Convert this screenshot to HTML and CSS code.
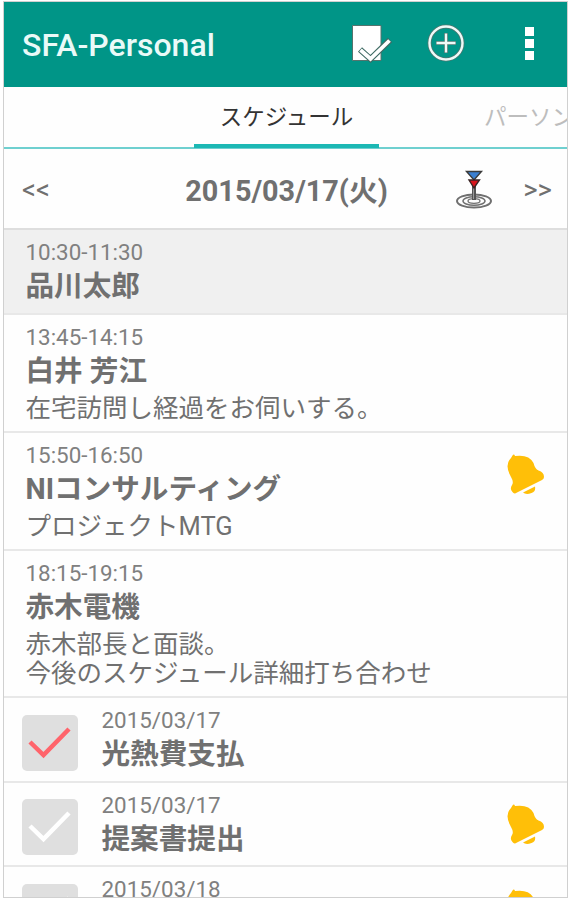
FILE: index.html
```
<!DOCTYPE html>
<html lang="ja">
<head>
  <meta charset="UTF-8">
  <title>SFA-Personal</title>
  <link rel="stylesheet" href="styles.css">
</head>
<body>
  <!-- shared icons -->
  <svg class="symbols">
    <symbol id="bell" viewBox="0 0 38 40">
      <path d="M4 4L5.500 1.500Q7-0.500 8 2Q22 0 26.500 9Q28 15 31.500 16.500Q37 18 37 23Q37 25 35 26L10 38.500Q7 40.500 5.500 38Q2.500 35 5 31Q7 28 4 23Q-3 11 4 4Z"/>
      <path d="M16 38.500L28 32.500Q29 38 24.500 39Q19 41 16 38.500Z"/>
    </symbol>
    <symbol id="check" viewBox="0 0 56 56">
      <path d="M8 27L21.500 40L47 14" fill="none" stroke="currentColor" stroke-width="4.500"/>
    </symbol>
  </svg>

  <div class="app">
    <header class="toolbar">
      <h1>SFA-Personal</h1>
      <svg class="icon-task" width="42" height="42" viewBox="0 0 42 42">
        <path d="M3.500 3.500H32V38.500H3.500Z" fill="#fff" stroke="#56736d" stroke-width="1"/>
        <path d="M11 27.500L21.500 37L41 18" fill="none" stroke="#3f6b64" stroke-width="6"/>
        <path d="M11.500 28L21.500 36.800L40.500 18.500" fill="none" stroke="#fff" stroke-width="3.800"/>
      </svg>
      <svg class="icon-add" width="38" height="38" viewBox="0 0 38 38" fill="none">
        <circle cx="19" cy="19" r="16.500" stroke="#4d7770" stroke-width="4"/>
        <path d="M9 19H29M19 9V29" stroke="#4d7770" stroke-width="4"/>
        <circle cx="19" cy="19" r="16.500" stroke="#eefaf8" stroke-width="2.400"/>
        <path d="M9.500 19H28.500M19 9.500V28.500" stroke="#eefaf8" stroke-width="2.400"/>
      </svg>
      <div class="more"><i></i><i></i><i></i></div>
    </header>

    <nav class="tabs">
      <span class="tab active">スケジュール</span>
      <span class="tab next">パーソン</span>
    </nav>

    <div class="datebar">
      <span class="arrow">&lt;&lt;</span>
      <strong>2015/03/17(火)</strong>
      <svg class="icon-pin" width="38" height="40" viewBox="0 0 38 40">
        <g fill="none" stroke="#707070">
          <ellipse cx="19" cy="31" rx="17" ry="6.500" stroke-width="2"/>
          <ellipse cx="19" cy="31" rx="11" ry="4.300" stroke-width="1.500"/>
          <ellipse cx="19" cy="31" rx="6" ry="2.300" stroke-width="1.300"/>
        </g>
        <path d="M19 15V30" stroke="#555" stroke-width="4"/>
        <path d="M18.500 17V29" stroke="#999" stroke-width="1"/>
        <path d="M11.500 1.500H26.500L19 10Z" fill="#3b7fd0" stroke="#3a3a3a" stroke-width="1.400"/>
        <path d="M14 10H24.500L19 18Z" fill="#d8141c" stroke="#3a2525" stroke-width="1.400"/>
      </svg>
      <span class="arrow">&gt;&gt;</span>
    </div>

    <ul class="list">
      <li class="selected">
        <div class="info">
          <span class="time">10:30-11:30</span>
          <b>品川太郎</b>
        </div>
      </li>
      <li>
        <div class="info">
          <span class="time">13:45-14:15</span>
          <b>白井 芳江</b>
          <p>在宅訪問し経過をお伺いする。</p>
        </div>
      </li>
      <li>
        <div class="info">
          <span class="time">15:50-16:50</span>
          <b>NIコンサルティング</b>
          <p>プロジェクトMTG</p>
        </div>
        <svg class="bell"><use href="#bell"/></svg>
      </li>
      <li>
        <div class="info">
          <span class="time">18:15-19:15</span>
          <b>赤木電機</b>
          <p>赤木部長と面談。<br>今後のスケジュール詳細打ち合わせ</p>
        </div>
      </li>
      <li class="todo">
        <svg class="box done"><use href="#check"/></svg>
        <div class="info">
          <span class="time">2015/03/17</span>
          <b>光熱費支払</b>
        </div>
      </li>
      <li class="todo">
        <svg class="box"><use href="#check"/></svg>
        <div class="info">
          <span class="time">2015/03/17</span>
          <b>提案書提出</b>
        </div>
        <svg class="bell"><use href="#bell"/></svg>
      </li>
      <li class="todo">
        <svg class="box"><use href="#check"/></svg>
        <div class="info">
          <span class="time">2015/03/18</span>
        </div>
        <svg class="bell"><use href="#bell"/></svg>
      </li>
    </ul>
  </div>
</body>
</html>
```
FILE: styles.css
```
* {
  box-sizing: border-box;
}

body {
  margin: 0;
  padding: 1px 2px 2px 3px;
  height: 900px;
  background-color: #fff;
  font-family: Roboto, "Noto Sans CJK JP", sans-serif;
  color: #707070;
  overflow: hidden;
}

.symbols {
  display: none;
}

.app {
  height: 897px;
  border: 1px solid #d0d0d0;
  background-color: #fefefe;
  overflow: hidden;
}

.toolbar {
  display: flex;
  align-items: center;
  height: 85px;
  padding: 0 33px 0 18px;
  background-color: #009587;
}

.toolbar h1 {
  flex: 1;
  margin: 0;
  font-size: 32px;
  font-weight: 500;
  color: #eafaf8;
}

.icon-task {
  margin: 0 36px 3px 0;
  overflow: visible;
}

.icon-add {
  margin: 0 60px 3px 0;
}

.more {
  display: flex;
  flex-direction: column;
  gap: 3px;
  margin-bottom: 2px;
}

.more i {
  width: 9px;
  height: 9px;
  background-color: #fff;
}

.tabs {
  display: flex;
  height: 62px;
  padding-left: 190px;
  border-bottom: 2px solid #6fd0d0;
  white-space: nowrap;
}

.tab {
  font-size: 22.5px;
  line-height: 61px;
}

.tab.active {
  flex: none;
  width: 185px;
  height: 61px;
  border-bottom: 4px solid #1cb8b4;
  text-align: center;
  color: #333;
}

.tab.next {
  margin-left: 105px;
  color: #bdbdbd;
}

.datebar {
  display: flex;
  align-items: center;
  height: 81px;
  padding: 1px 15px 0 18px;
  border-bottom: 2px solid #dedede;
}

.datebar strong {
  flex: 1;
  padding: 3px 0 0 68px;
  text-align: center;
  font-size: 28.8px;
  line-height: 40px;
}

.arrow {
  padding-top: 2px;
  font-size: 27.5px;
  line-height: 32px;
}

.icon-pin {
  margin: 2px 30px 0 0;
}

.list {
  margin: 0;
  padding: 0;
  list-style: none;
}

.list li {
  display: flex;
  align-items: flex-start;
  padding: 9px 22px 7.5px 21.5px;
  border-bottom: 2px solid #e8e8e8;
}

.list li.selected {
  background-color: #f0f0f0;
}

.info {
  flex: 1;
}

.time {
  display: block;
  font-size: 22.4px;
  line-height: 26px;
  color: #808080;
}

.info b {
  display: block;
  height: 40px;
  font-size: 28.6px;
  line-height: 43px;
}

.info p {
  margin: 4px 0 0;
  font-size: 25.5px;
  line-height: 29.5px;
}

.list .todo {
  padding-left: 18px;
}

.box {
  width: 56px;
  height: 56px;
  margin: 7.5px 23.5px 0 0;
  border-radius: 5px;
  background-color: #dfdfdf;
  color: #fff;
}

.box.done {
  color: #ff646b;
}

.bell {
  width: 38px;
  height: 40px;
  margin-top: 12.5px;
  fill: #ffbf08;
}
```
